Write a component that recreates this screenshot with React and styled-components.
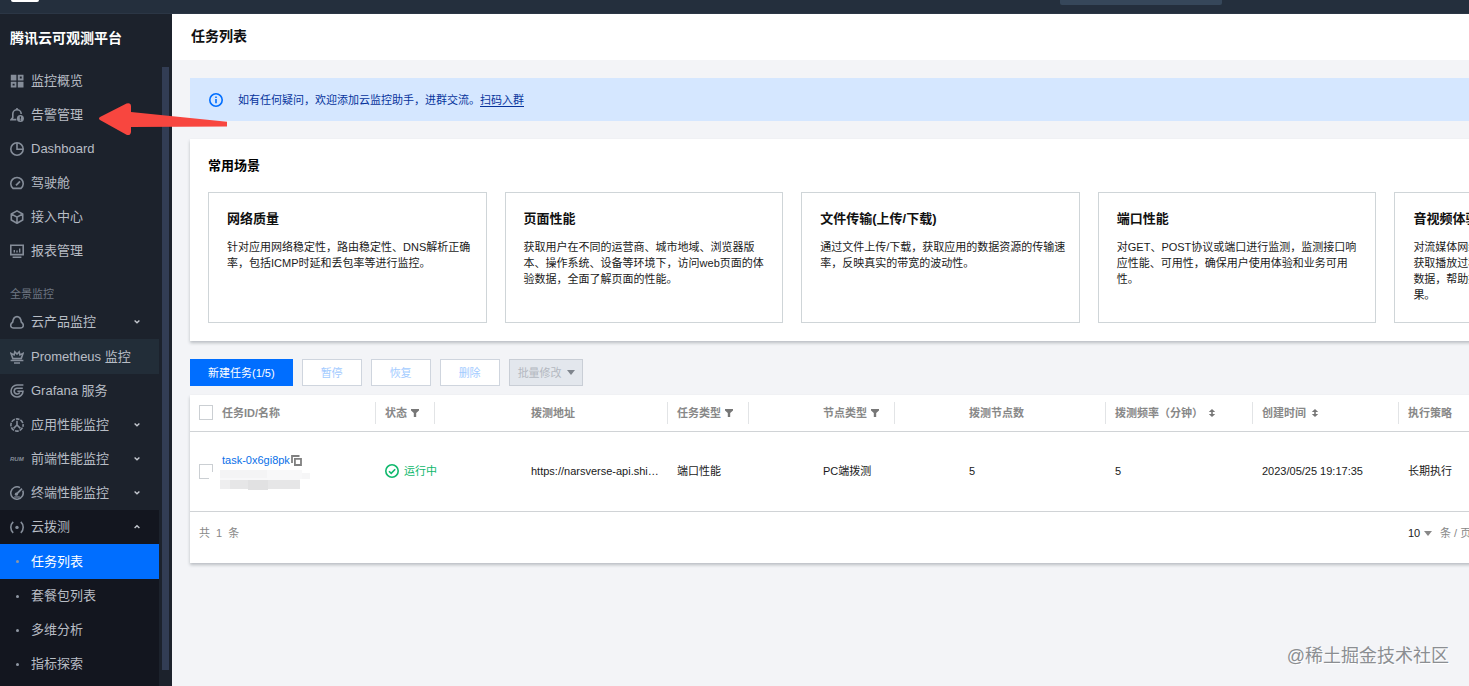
import React from "react";
import styled, { createGlobalStyle, css } from "styled-components";

const GlobalStyle = createGlobalStyle`
  *, *::before, *::after { box-sizing: border-box; }
  body {
    margin: 0;
    background: #f3f4f7;
    color: #1a1a1a;
    font-family: "Liberation Sans", "Noto Sans CJK SC", sans-serif;
    font-size: 11px;
    line-height: 16px;
  }
  h1, h2, h3, p, ul { margin: 0; padding: 0; }
  ul { list-style: none; }
  button, select, input { font: inherit; margin: 0; }
  svg { display: block; flex: none; }
`;

/* ---------- shell ---------- */
const Page = styled.div`
  position: relative;
  display: flex;
  flex-direction: column;
  min-height: 100vh;
  overflow: hidden;
`;
const TopBar = styled.header`
  display: flex;
  align-items: flex-start;
  justify-content: space-between;
  height: 14px;
  padding: 0 247px 0 11px;
  background: #242f3d;
  border-bottom: 1px solid #2b3645;
`;
const BrandMark = styled.span`
  width: 28px;
  height: 2px;
  border-radius: 0 0 6px 6px;
  background: #fff;
`;
const TopSearch = styled.span`
  width: 162px;
  height: 5px;
  border-radius: 0 0 2px 2px;
  background: #36475a;
`;
const Body = styled.div`
  display: flex;
  flex: 1;
`;

/* ---------- sidebar ---------- */
const Sidebar = styled.aside`
  display: flex;
  flex-direction: column;
  flex: 0 0 172px;
  background: #1c222c;
`;
const SideTitle = styled.h2`
  padding: 14px 10px 16px;
  font-size: 14px;
  line-height: 20px;
  color: #fff;
`;
const SideScroll = styled.div`
  display: flex;
  flex: 1;
  gap: 3px;
`;
const Nav = styled.nav`
  display: flex;
  flex-direction: column;
  flex: 0 0 159px;
`;
const ScrollThumb = styled.div`
  width: 7px;
  margin: 3px 0 16px;
  background: #323d54;
`;
const NavLink = styled.a`
  display: flex;
  align-items: center;
  gap: 7px;
  height: ${(p) => (p.$state ? 35 : 34)}px;
  padding: 0 19px 0 10px;
  font-size: 13px;
  color: ${(p) => (p.$state === "active" ? "#fff" : "#b8bdc5")};
  text-decoration: none;
  ${(p) => p.$state === "hover" && css`background: #222d38;`}
  ${(p) => p.$state === "active" && css`background: #006eff;`}
  > svg { color: #858d99; }
`;
const NavText = styled.span`
  flex: 1;
  white-space: nowrap;
`;
const NavGroup = styled.p`
  padding: 15px 10px 0;
  line-height: 22px;
  color: #6e7682;
`;
const SubNav = styled.div`
  flex: 1;
  background: #13161f;
`;
const Dot = styled.span`
  width: 14px;
  display: flex;
  justify-content: center;
  &::before {
    content: "";
    width: 3px;
    height: 3px;
    border-radius: 2px;
    background: #8f97a3;
  }
`;

/* ---------- main ---------- */
const Main = styled.main`
  flex: 1;
  min-width: 0;
  overflow: hidden;
`;
const PageHead = styled.div`
  padding: 12px 18px 14px 19px;
  background: #fff;
`;
const PageTitle = styled.h1`
  font-size: 14px;
  line-height: 20px;
  color: #111;
`;
const Content = styled.div`
  display: flex;
  flex-direction: column;
  gap: 18px;
  min-width: 1537px;
  padding: 18px;
`;
const Notice = styled.div`
  display: flex;
  align-items: center;
  gap: 15px;
  height: 43px;
  padding: 0 19px;
  background: #d5e7ff;
  color: #06339c;
  > svg { color: #006eff; }
  a { color: inherit; text-underline-offset: 2px; }
`;
const Panel = styled.section`
  background: #fff;
  box-shadow: 0 2px 3px rgba(40, 50, 60, 0.28);
`;
const ScenePanel = styled(Panel)`
  padding: 18px;
`;
const SceneHeading = styled.h2`
  margin-bottom: 18px;
  font-size: 13px;
  line-height: 17px;
  color: #000;
`;
const SceneList = styled.ul`
  display: flex;
  gap: 18px;
`;
const Scene = styled.li`
  flex: 1 1 0;
  min-width: 0;
  min-height: 131px;
  padding: 17px 10px 10px 18px;
  border: 1px solid #cfd5d8;
`;
const SceneTitle = styled.h3`
  margin-bottom: 11px;
  font-size: 13px;
  line-height: 18px;
  color: #111;
`;
const TaskArea = styled.div`
  display: flex;
  flex-direction: column;
  gap: 9px;
`;
const Toolbar = styled.div`
  display: flex;
  gap: 9px;
`;
const Button = styled.button`
  display: flex;
  align-items: center;
  height: 27px;
  padding: 0 18px;
  border: 1px solid #cfd5de;
  background: #fff;
  color: #a3cbff;
`;
const PrimaryButton = styled(Button)`
  padding: 0 17px;
  border-color: #006eff;
  background: #006eff;
  color: #fff;
`;
const MenuButton = styled(Button)`
  gap: 5px;
  padding: 0 7px 0 8px;
  border-color: #c9ced6;
  background: #e3e7ed;
  color: #b3b8c0;
  > svg { color: #7f858d; }
`;

/* ---------- table ---------- */
const Table = styled.table`
  width: 100%;
  border-collapse: collapse;
  table-layout: fixed;
`;
const Col = styled.col`
  width: ${(p) => (p.$w ? p.$w + "px" : "auto")};
`;
const HeadRow = styled.tr`
  height: 36px;
  border-bottom: 1px solid #d0d3d6;
`;
const HeadCell = styled.th`
  padding: 0;
  text-align: left;
  color: #888;
`;
const HeadLabel = styled.div`
  display: inline-flex;
  align-items: center;
  gap: ${(p) => (p.$sort ? 5 : 4)}px;
  height: 22px;
  padding: 0 15px 0 9px;
  border: 0 solid #e2e4e6;
  border-left: 1px solid ${(p) => (p.$divider ? "#e2e4e6" : "transparent")};
  border-right-width: ${(p) => (p.$filter ? 1 : 0)}px;
  vertical-align: middle;
  white-space: nowrap;
`;
const BodyRow = styled.tr`
  height: 80px;
  border-bottom: 1px solid #d0d3d6;
`;
const Cell = styled.td`
  padding: 0 7px 0 10px;
  overflow: hidden;
  text-overflow: ellipsis;
  white-space: nowrap;
`;
const CheckCell = styled.td`
  padding: 0 0 0 9px;
`;
const CheckHead = styled.th`
  padding: 0 0 0 9px;
`;
const Check = styled.input`
  appearance: none;
  display: block;
  width: 14px;
  height: 15px;
  border: 1px solid #cbcfd3;
  background: #fff;
`;
const IdCell = styled.td`
  padding: 0 0 0 10px;
`;
const IdLine = styled.div`
  display: flex;
  align-items: center;
  gap: 1px;
  color: #808080;
  a { color: #0a70e8; text-decoration: none; }
`;
const Mosaic = styled.svg`
  margin-left: -13px;
`;
const Status = styled.span`
  display: flex;
  align-items: center;
  gap: 5px;
  color: #0fb86c;
`;
const Footer = styled.div`
  display: flex;
  justify-content: space-between;
  align-items: center;
  height: 51px;
  padding: 0 0 8px 9px;
  color: #888;
`;
const Total = styled.span`
  display: flex;
  gap: 6px;
`;
const Pager = styled.div`
  display: flex;
  align-items: center;
  flex: 0 0 283px;
  gap: 8px;
`;
const SizeLabel = styled.label`
  display: flex;
  align-items: center;
  color: #888;
`;
const SizeSelect = styled.select`
  appearance: none;
  width: 16px;
  padding: 0;
  border: 0;
  background: transparent;
  color: #222;
`;
const PagerButton = styled.button`
  width: 24px;
  height: 24px;
  border: 1px solid #cfd5de;
  background: #fff;
  color: #888;
`;

/* ---------- overlays ---------- */
const Pointer = styled.svg`
  position: absolute;
  left: 98px;
  top: 102px;
`;
const Watermark = styled.span`
  position: absolute;
  right: 20px;
  bottom: 18px;
  font-size: 18px;
  line-height: 24px;
  color: #8b8e92;
  text-shadow: 1px 1px 0 #fff;
`;

/* ---------- icons ---------- */
const Icon = ({ children, size = 14, ...rest }) => (
  <svg width={size} height={size} viewBox="0 0 14 14" fill="none" stroke="currentColor" strokeWidth="1.6" aria-hidden="true" {...rest}>
    {children}
  </svg>
);
const icons = {
  overview: (
    <Icon stroke="none" fill="currentColor">
      <path d="M.8.8h5.600v5.600H.8zM7.800 7.800h5.700v5.700H7.800z" />
      <path fillRule="evenodd" d="M7.800.8h5.700v5.600H7.800zM9.800 2.600v2h1.900v-2zM.8 7.800h5.600v5.700H.8zM2.600 9.700v1.900h2V9.700z" />
    </Icon>
  ),
  alarm: (
    <Icon>
      <path d="M7 0v2M6.400 11.600H1.200L2.800 9.600V6a4.200 4.200 0 0 1 8.400 0" />
      <circle cx="10.400" cy="10.500" r="3.500" fill="currentColor" stroke="none" />
      <path d="M10.400 8.400v2.400M10.400 11.500v1.100" stroke="#1c222c" strokeWidth="1.200" />
    </Icon>
  ),
  dashboard: (
    <Icon>
      <circle cx="7" cy="7" r="6.200" />
      <path d="M7 1v6.200h6" />
    </Icon>
  ),
  cockpit: (
    <Icon>
      <path d="M3 12.400A6.200 6.200 0 1 1 11 12.400z" strokeLinejoin="round" />
      <path d="M6 9.400l4-4" strokeWidth="1.800" />
    </Icon>
  ),
  cube: (
    <Icon>
      <path d="M7 .9l5.700 3.100v6L7 13.200 1.300 10V4zM1.300 4L7 7.100 12.700 4M7 7.100v6" strokeLinejoin="round" />
    </Icon>
  ),
  report: (
    <Icon>
      <path d="M.8 1.200h12.400v9.400H.8zM2.600 13.200h8.800" />
      <path d="M4.300 6v2.400M7 6.600v1.800M9.700 4.400v4" strokeWidth="1.400" />
    </Icon>
  ),
  cloud: (
    <Icon>
      <path d="M3.700 13C-.1 13-.1 9 2.600 7.300 3.200 3.200 4.700 1.600 7 1.600s3.800 1.600 4.400 5.700C14.100 9 14.100 13 10.300 13z" />
    </Icon>
  ),
  prometheus: (
    <Icon>
      <path d="M2.800 8.600L1 3.400l3.100 1.500L4.800 1.800 7 4.100 9.200 1.800l.7 3.100L13 3.400l-1.800 5.200z" />
      <path d="M.6 10.600h12.800M4 13h6" strokeWidth="1.500" />
    </Icon>
  ),
  grafana: (
    <Icon>
      <path d="M13.400 1H7a6 6 0 1 0 6 6.200H7.400M12.800 4.200H7a2.900 2.900 0 1 0 2.700 4.200" />
    </Icon>
  ),
  apm: (
    <Icon>
      <circle cx="7" cy="7" r="6.100" strokeDasharray="3.800 1" strokeDashoffset="2" />
      <path d="M7 2.800v4.700M7 7l-3.400 3.400M7 7l3.400 3.400" />
    </Icon>
  ),
  device: (
    <Icon>
      <path d="M10 1.600A6.200 6.200 0 1 0 12.700 4.600" />
      <path d="M6.200 8.400l5.800-5.800" strokeWidth="1.800" />
      <circle cx="6.400" cy="8.200" r="1.600" fill="currentColor" stroke="none" />
      <path d="M4.200 11h5.600" strokeWidth="1.200" />
    </Icon>
  ),
  probe: (
    <Icon>
      <path d="M3.200 1.800C0 4.800 0 9.800 3.200 12.800M10.800 1.800c3.200 3 3.200 8 0 11" />
      <circle cx="7" cy="7.400" r="1.700" fill="currentColor" stroke="none" />
    </Icon>
  ),
};
const RunBadge = styled.span`
  width: 14px;
  font-size: 6px;
  font-weight: 700;
  font-style: italic;
  line-height: 14px;
  color: #858d99;
`;
const Chevron = ({ up }) => (
  <svg width="6" height="6" viewBox="0 0 6 6" fill="none" stroke="#c4c8cf" strokeWidth="1.400" aria-hidden="true">
    <path d={up ? "M.6 4L3 1.800 5.400 4" : "M.6 1.600L3 3.800 5.400 1.600"} />
  </svg>
);
const Caret = () => (
  <svg width="8" height="5" viewBox="0 0 8 5" fill="currentColor" aria-hidden="true">
    <path d="M0 0h8L4 5z" />
  </svg>
);
const FilterIcon = () => (
  <svg width="8" height="8" viewBox="0 0 8 8" fill="#777" aria-hidden="true">
    <path d="M0 0h8v1.400L5.200 4v4H2.800V4L0 1.400z" />
  </svg>
);
const SortIcon = () => (
  <svg width="8" height="8" viewBox="0 0 8 8" fill="#777" aria-hidden="true">
    <path d="M4 0l3.200 3H4.800v2h2.400L4 8 .8 5h2.400V3H.8z" />
  </svg>
);

/* ---------- data ---------- */
const mainNav = [
  ["overview", "监控概览"],
  ["alarm", "告警管理"],
  ["dashboard", "Dashboard"],
  ["cockpit", "驾驶舱"],
  ["cube", "接入中心"],
  ["report", "报表管理"],
];
const sceneNav = [
  { icon: "cloud", text: "云产品监控", more: true },
  { icon: "prometheus", text: "Prometheus 监控", state: "hover" },
  { icon: "grafana", text: "Grafana 服务" },
  { icon: "apm", text: "应用性能监控", more: true },
  { icon: "run", text: "前端性能监控", more: true },
  { icon: "device", text: "终端性能监控", more: true },
];
const probeNav = ["任务列表", "套餐包列表", "多维分析", "指标探索"];
const scenes = [
  ["网络质量", "针对应用网络稳定性，路由稳定性、DNS解析正确率，包括ICMP时延和丢包率等进行监控。"],
  ["页面性能", "获取用户在不同的运营商、城市地域、浏览器版本、操作系统、设备等环境下，访问web页面的体验数据，全面了解页面的性能。"],
  ["文件传输(上传/下载)", "通过文件上传/下载，获取应用的数据资源的传输速率，反映真实的带宽的波动性。"],
  ["端口性能", "对GET、POST协议或端口进行监测，监测接口响应性能、可用性，确保用户使用体验和业务可用性。"],
  ["音视频体验", "对流媒体网络链路以及音视频播放质量进行监测，获取播放过程中的首屏时间和卡顿率等关键性能的数据，帮助提升用户在移动端和网页端的播放效果。"],
];
const columns = [
  { text: "状态", divider: true, filter: true, w: 146 },
  { text: "拨测地址", w: 146 },
  { text: "任务类型", divider: true, filter: true, w: 146 },
  { text: "节点类型", filter: true, w: 146 },
  { text: "拨测节点数", w: 146 },
  { text: "拨测频率（分钟）", divider: true, sort: true, w: 147 },
  { text: "创建时间", divider: true, sort: true, w: 146 },
  { text: "执行策略", divider: true, w: 146 },
  { text: "操作" },
];

export default function App() {
  return (
    <Page>
      <GlobalStyle />
      <TopBar>
        <BrandMark />
        <TopSearch />
      </TopBar>
      <Body>
        <Sidebar>
          <SideTitle>腾讯云可观测平台</SideTitle>
          <SideScroll>
            <Nav>
              {mainNav.map(([icon, text]) => (
                <NavLink key={text} href="#">
                  {icons[icon]}
                  <NavText>{text}</NavText>
                </NavLink>
              ))}
              <NavGroup>全景监控</NavGroup>
              {sceneNav.map((n) => (
                <NavLink key={n.text} href="#" $state={n.state}>
                  {n.icon === "run" ? <RunBadge>RUM</RunBadge> : icons[n.icon]}
                  <NavText>{n.text}</NavText>
                  {n.more && <Chevron />}
                </NavLink>
              ))}
              <SubNav>
                <NavLink href="#">
                  {icons.probe}
                  <NavText>云拨测</NavText>
                  <Chevron up />
                </NavLink>
                {probeNav.map((text, i) => (
                  <NavLink key={text} href="#" $state={i === 0 ? "active" : undefined}>
                    <Dot />
                    <NavText>{text}</NavText>
                  </NavLink>
                ))}
              </SubNav>
            </Nav>
            <ScrollThumb />
          </SideScroll>
        </Sidebar>
        <Main>
          <PageHead>
            <PageTitle>任务列表</PageTitle>
          </PageHead>
          <Content>
            <Notice>
              <Icon>
                <circle cx="7" cy="7" r="6.200" />
                <path d="M7 6v4.300M7 3.400v1.500" />
              </Icon>
              <p>
                如有任何疑问，欢迎添加云监控助手，进群交流。<a href="#">扫码入群</a>
              </p>
            </Notice>
            <ScenePanel>
              <SceneHeading>常用场景</SceneHeading>
              <SceneList>
                {scenes.map(([title, text]) => (
                  <Scene key={title}>
                    <SceneTitle>{title}</SceneTitle>
                    <p>{text}</p>
                  </Scene>
                ))}
              </SceneList>
            </ScenePanel>
            <TaskArea>
              <Toolbar>
                <PrimaryButton type="button">新建任务(1/5)</PrimaryButton>
                <Button type="button" disabled>暂停</Button>
                <Button type="button" disabled>恢复</Button>
                <Button type="button" disabled>删除</Button>
                <MenuButton type="button" disabled>
                  批量修改
                  <Caret />
                </MenuButton>
              </Toolbar>
              <Panel>
                <Table>
                  <colgroup>
                    <Col $w={22} />
                    <Col $w={163} />
                    {columns.map((c) => (
                      <Col key={c.text} $w={c.w} />
                    ))}
                  </colgroup>
                  <thead>
                    <HeadRow>
                      <CheckHead>
                        <Check type="checkbox" aria-label="全选" />
                      </CheckHead>
                      <HeadCell>
                        <HeadLabel>任务ID/名称</HeadLabel>
                      </HeadCell>
                      {columns.map((c) => (
                        <HeadCell key={c.text}>
                          <HeadLabel $divider={c.divider} $filter={c.filter} $sort={c.sort}>
                            {c.text}
                            {c.filter && <FilterIcon />}
                            {c.sort && <SortIcon />}
                          </HeadLabel>
                        </HeadCell>
                      ))}
                    </HeadRow>
                  </thead>
                  <tbody>
                    <BodyRow>
                      <CheckCell>
                        <Check type="checkbox" aria-label="选择 task-0x6gi8pk" />
                      </CheckCell>
                      <IdCell>
                        <IdLine>
                          <a href="#">task-0x6gi8pk</a>
                          <svg width="11" height="11" viewBox="0 0 11 11" fill="none" stroke="currentColor" strokeWidth="1.800" aria-hidden="true">
                            <path d="M3.900 3.900h6.100v6.100H3.900zM1 8V1h7.500" />
                          </svg>
                        </IdLine>
                        <Mosaic width="112" height="22" viewBox="0 0 112 22" aria-hidden="true">
                          <path fill="#fff" d="M0 4h12v18H0z" />
                          <path fill="#f4f4f5" d="M11 2h47v8H11z" />
                          <path fill="#f8f8f9" d="M58 2h35v9H58zM11 10h80v2H11z" />
                          <path fill="#eeeeef" d="M11 12h10v9H11z" />
                          <path fill="#e6e6e7" d="M21 12h70v9H21z" />
                          <path fill="#e1e1e2" d="M39 12h20v10H39z" />
                          <path fill="#f6f6f7" d="M93 5h8v6h-8z" />
                        </Mosaic>
                      </IdCell>
                      <Cell>
                        <Status>
                          <Icon>
                            <circle cx="7" cy="7" r="6.200" />
                            <path d="M4 7.200l2.200 2.200L10.200 5.200" />
                          </Icon>
                          运行中
                        </Status>
                      </Cell>
                      <Cell>https://narsverse-api.shi…</Cell>
                      <Cell>端口性能</Cell>
                      <Cell>PC端拨测</Cell>
                      <Cell>5</Cell>
                      <Cell>5</Cell>
                      <Cell>2023/05/25 19:17:35</Cell>
                      <Cell>长期执行</Cell>
                      <Cell />
                    </BodyRow>
                  </tbody>
                </Table>
                <Footer>
                  <Total>
                    <span>共</span>
                    <span>1</span>
                    <span>条</span>
                  </Total>
                  <Pager>
                    <SizeLabel htmlFor="page-size">
                      <SizeSelect id="page-size" defaultValue="10">
                        <option>10</option>
                        <option>20</option>
                      </SizeSelect>
                      <Caret />
                    </SizeLabel>
                    <span>条 / 页</span>
                    <PagerButton type="button" aria-label="上一页">‹</PagerButton>
                    <PagerButton type="button" aria-label="下一页">›</PagerButton>
                  </Pager>
                </Footer>
              </Panel>
            </TaskArea>
          </Content>
        </Main>
      </Body>
      <Pointer width="130" height="34" viewBox="0 0 130 34" aria-hidden="true">
        <path
          d="M2 15L28.500 1.600Q33 .5 33 4.500V10L129 19.800V24.600L33 24.900V30Q32.500 34 28.500 32.800L2 18Q0 16.500 2 15z"
          fill="#f8463f"
        />
      </Pointer>
      <Watermark>@稀土掘金技术社区</Watermark>
    </Page>
  );
}
